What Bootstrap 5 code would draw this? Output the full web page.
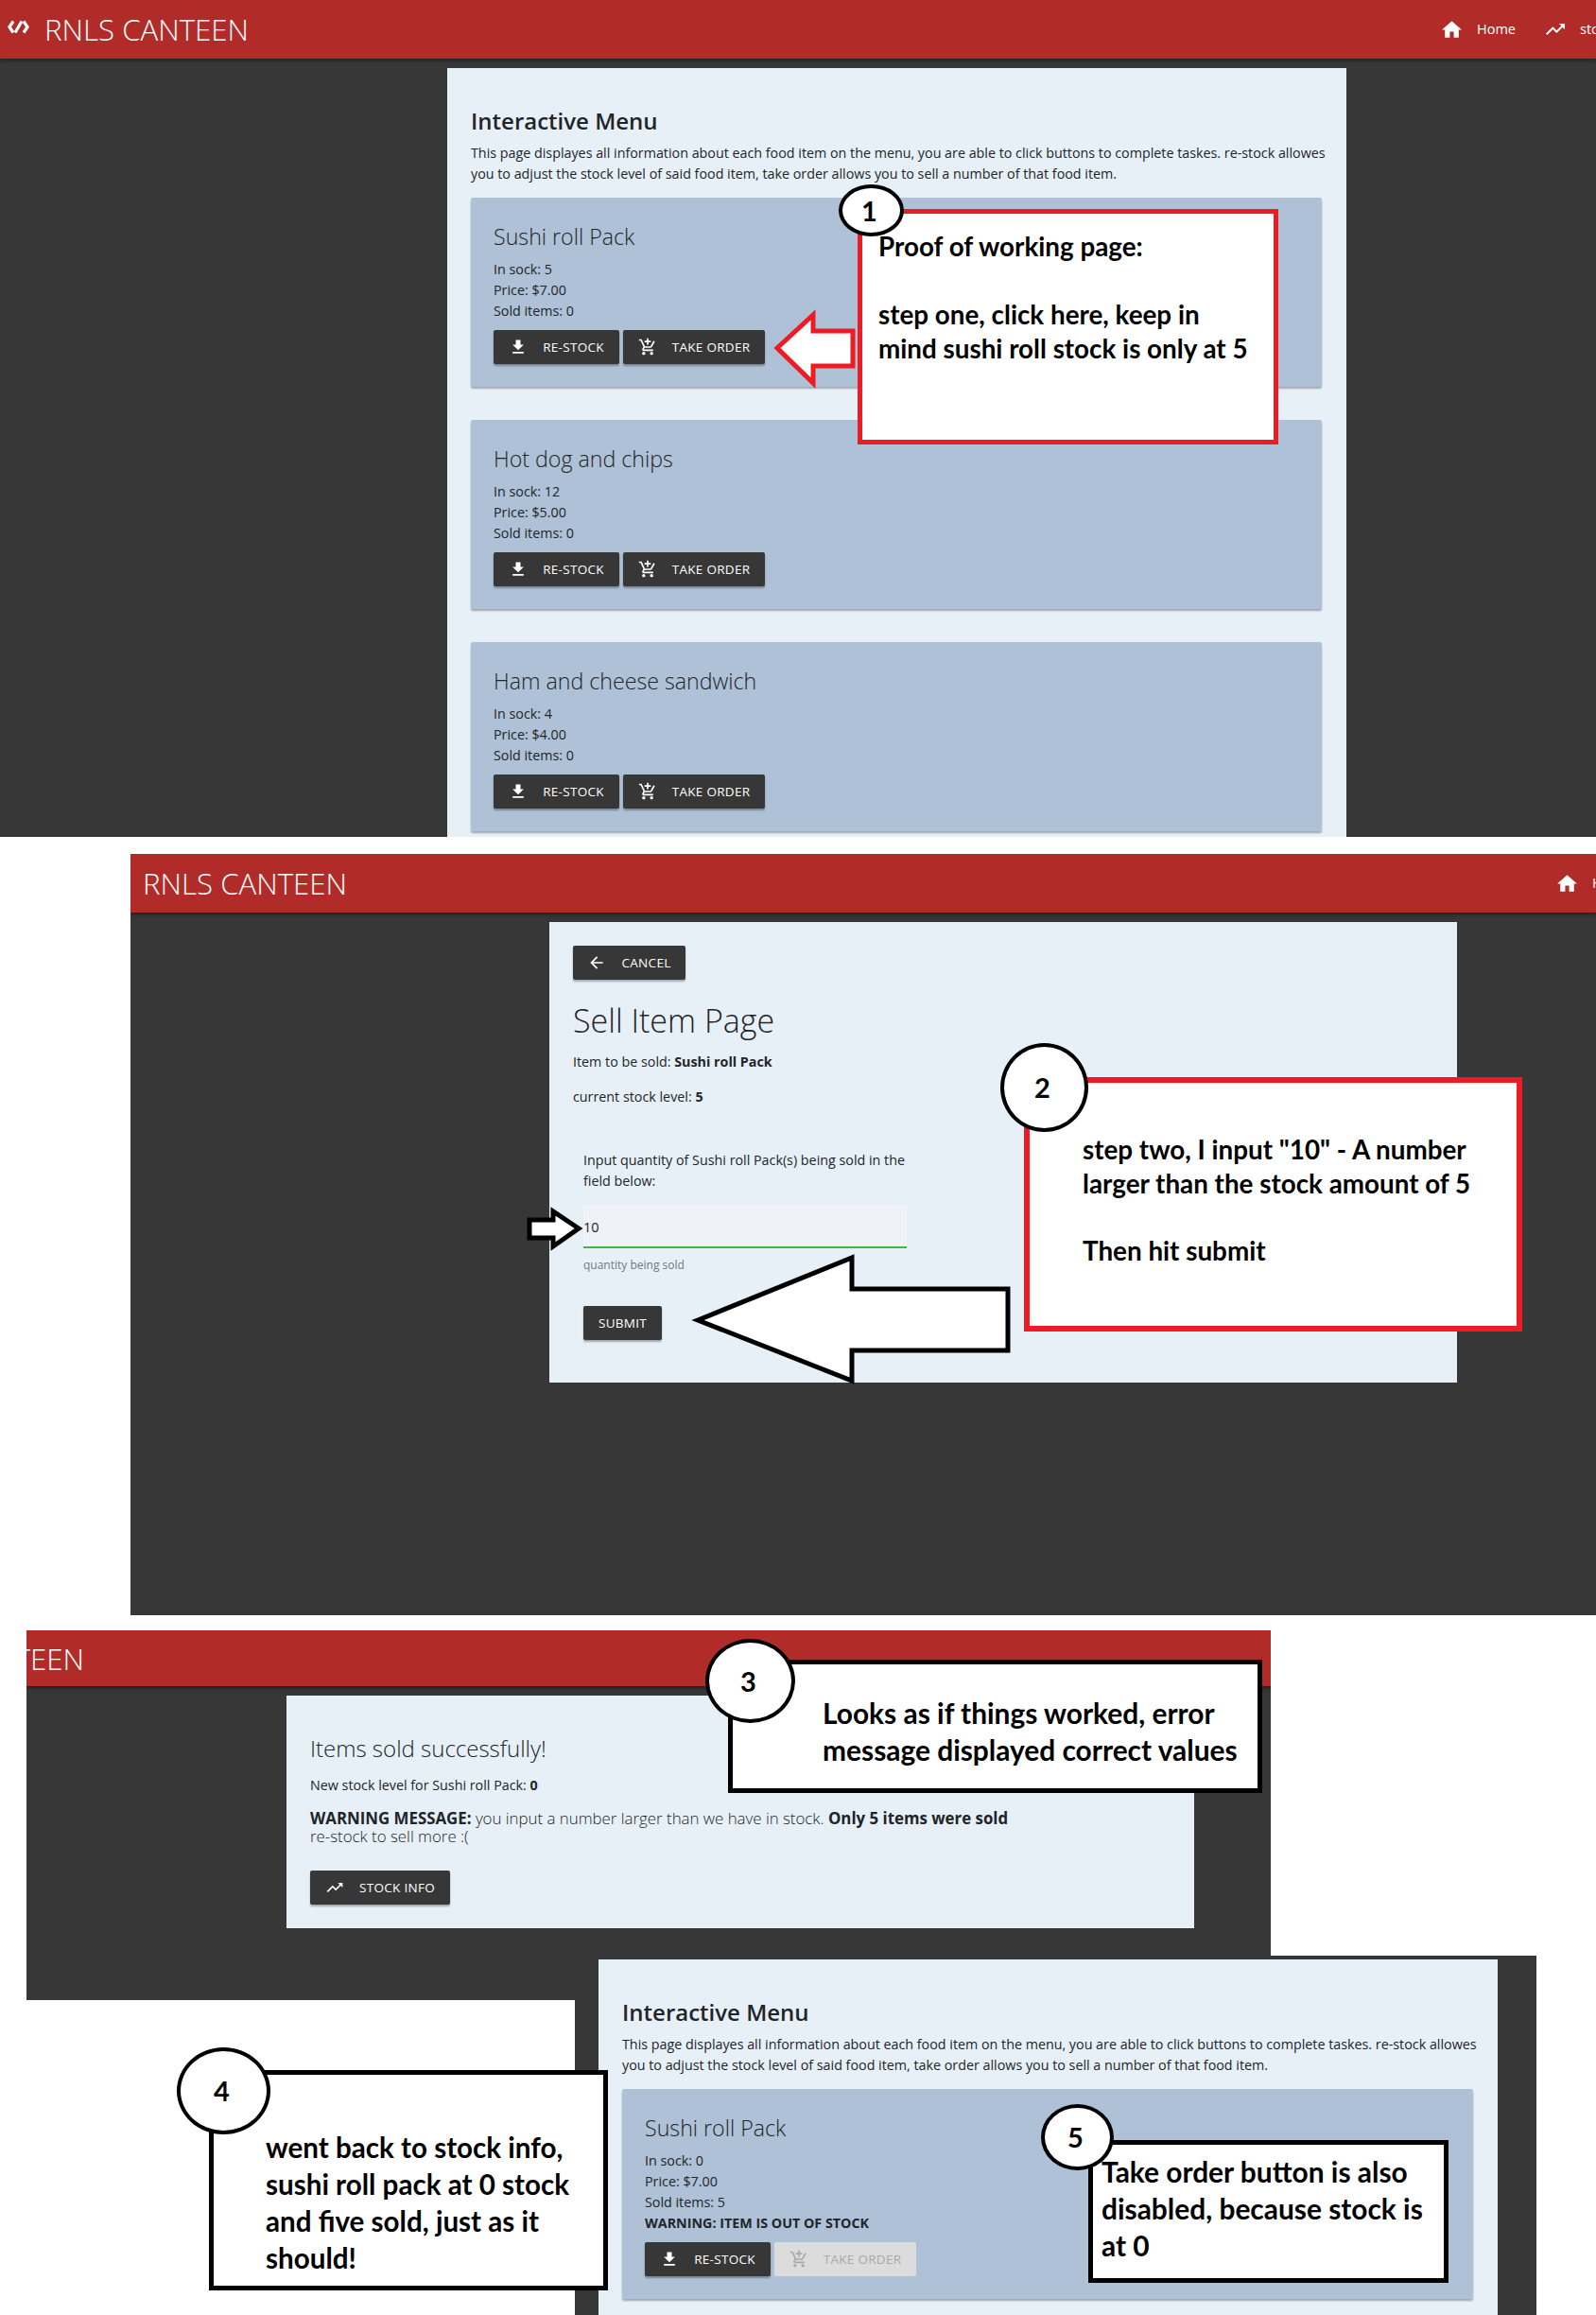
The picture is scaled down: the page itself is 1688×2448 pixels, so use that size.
<!DOCTYPE html>
<html lang="en">
<head>
  <meta charset="UTF-8">
  <title>RNLS Canteen - proof of working page</title>
  <link href="https://cdn.jsdelivr.net/npm/bootstrap@5.3.0/dist/css/bootstrap.min.css" rel="stylesheet">
  <style>
    body { background: #fff; margin: 0; font-family: "Open Sans", sans-serif; color: #212529; }
    .collage { position: relative; width: 1688px; height: 2448px; overflow: hidden; }

    /* the four pasted screenshots */
    .shot { position: absolute; background: #373737; overflow: hidden; }
    #shot1 { left: 0; top: 0; width: 1688px; height: 885px; }
    #shot2 { left: 138px; top: 903px; width: 1550px; height: 805px; }
    #shot3 { left: 28px; top: 1724px; width: 1316px; height: 391px; }
    #shot4 { left: 608px; top: 2068px; width: 1017px; height: 380px; }

    .app-bar { height: 62px; background: #b12c29; box-shadow: 0 2px 4px rgba(0,0,0,.45); padding: 0; flex-wrap: nowrap; justify-content: flex-start; }
    #shot3 .app-bar { height: 59px; }
    .app-brand { font-size: 31.2px; line-height: 62px; color: #fff; font-weight: 300; white-space: nowrap; }
    .app-logo { width: 23px; height: 15px; margin: 0 16px 5px 8px; flex-shrink: 0; }
    .app-nav { margin-left: auto; flex-shrink: 0; overflow: hidden; }
    #shot1 .app-nav { width: 165px; }
    #shot2 .app-nav { width: 43px; }
    .app-link { font-size: 14.5px; color: #fff; white-space: nowrap; font-weight: 400; }
    .app-link svg { width: 25px; height: 25px; fill: #fff; margin-right: 14px; flex-shrink: 0; }
    .app-link + .app-link { margin-left: 30px; }
    .app-link + .app-link svg { width: 24px; height: 24px; }
    #shot2 .app-brand { margin-left: 13px; }
    #shot3 .app-brand { margin-left: -155px; }

    .sheet { background: #e8f0f7; padding-left: 25px; padding-right: 26px; }
    #shot1 .sheet { width: 951px; height: 813px; margin: 10px 0 0 473px; padding-top: 40px; }
    #shot2 .sheet { width: 960px; height: 487px; margin: 10px 0 0 443px; padding-top: 25px; }
    #shot3 .sheet { width: 960px; height: 246px; margin: 10px 0 0 275px; padding-top: 38px; }
    #shot4 .sheet { width: 951px; height: 376px; margin: 4px 0 0 25px; padding-top: 40px; }

    .sheet-head { font-size: 24px; line-height: 32px; font-weight: 600; margin: 0; }
    .sheet-text { font-size: 14.3px; line-height: 22px; font-weight: 400; margin: 7px 0 14px; white-space: nowrap; }

    .food-card { background: #aec1d6; border: 0; border-radius: 2px; box-shadow: 0 2px 2px rgba(0,0,0,.3); padding: 24px; margin-bottom: 35px; }
    .food-name { font-size: 23.2px; line-height: 35px; font-weight: 300; margin: 0 0 6px; }
    .food-line { font-size: 14.3px; line-height: 22px; font-weight: 400; }
    .food-warn { font-size: 14.3px; line-height: 22px; font-weight: 700; }
    .food-actions { margin-top: 9px; }

    .dark-btn { height: 36px; background: #373737; color: #fff; border: 0; border-radius: 2px; font-size: 13.5px; line-height: 36px; padding: 0; letter-spacing: .3px;
      box-shadow: 0 2px 2px rgba(0,0,0,.3); text-transform: uppercase; white-space: nowrap; }
    .dark-btn:disabled { background: #dcdcdc; color: #a8a8a8; opacity: 1; box-shadow: none; }
    .dark-btn svg { width: 20px; height: 20px; fill: currentColor; }
    .btn-stock { width: 133px; }
    .btn-order { width: 150px; }
    .btn-cancel { width: 119px; }
    .btn-submit { width: 83px; }
    .btn-info-stock { width: 148px; }

    .sell-title { font-size: 34px; line-height: 44px; font-weight: 300; margin: 21px 0 11px; }
    .sell-line { font-size: 14.3px; line-height: 22px; font-weight: 400; margin: 0 0 15px; }
    .sell-form { width: 342px; margin: 45px 0 0 11px; }
    .sell-form p { font-size: 14.3px; line-height: 22px; font-weight: 400; margin: 0 0 14px; }
    .sell-input { height: 46px; background: #eff3f8; border: 0; border-bottom: 2px solid #4caf50; border-radius: 0; padding: 2px 0 0; font-size: 14.5px; box-shadow: none; }
    .sell-help { font-size: 12px; line-height: 18px; color: #6f7a84; margin-top: 9px; font-weight: 400; }
    .sell-form .dark-btn { margin-top: 34px; }

    .done-title { font-size: 24px; line-height: 36px; font-weight: 300; margin: 0 0 10px; }
    .done-line { font-size: 14.3px; line-height: 22px; font-weight: 400; margin: 0 0 14px; }
    .done-warn { font-size: 16.85px; line-height: 19px; font-weight: 300; margin: 0 0 27px; }
    .sheet b, .sheet strong { font-weight: 700; }

    /* paint annotations lying over the screenshots */
    .note { position: absolute; background: #fff; border: 5px solid #000; font-family: Lato, sans-serif; font-weight: 700; color: #000; white-space: nowrap; }
    #note1 { left: 907px; top: 221px; width: 445px; height: 249px; border-color: #ed1c24; padding: 17px 0 0 17px; font-size: 27.8px; line-height: 36px; }
    #note2 { left: 1083px; top: 1139px; width: 527px; height: 269px; border-color: #ed1c24; border-width: 6px; padding: 53px 0 0 56px; font-size: 27.8px; line-height: 35.7px; }
    #note3 { left: 770px; top: 1755px; width: 565px; height: 141px; padding: 32px 0 0 95px; font-size: 29.9px; line-height: 39px; }
    #note4 { left: 221px; top: 2189px; width: 422px; height: 233px; padding: 57px 0 0 55px; font-size: 29.6px; line-height: 39px; }
    #note5 { left: 1151px; top: 2263px; width: 381px; height: 151px; padding: 9px 0 0 9px; font-size: 29.9px; line-height: 39px; }

    .step-dot { position: absolute; background: #fff; border: 4px solid #000; border-radius: 50%; font-family: Lato, sans-serif; font-weight: 700; color: #000;
      display: flex; align-items: center; justify-content: center; font-size: 29px; padding-right: 4px; }
    #dot1 { left: 887px; top: 195px; width: 69px; height: 55px; }
    #dot2 { left: 1058px; top: 1103px; width: 93px; height: 94px; }
    #dot3 { left: 746px; top: 1733px; width: 95px; height: 89px; }
    #dot4 { left: 187px; top: 2165px; width: 99px; height: 92px; }
    #dot5 { left: 1101px; top: 2225px; width: 77px; height: 70px; }

    .paint-arrow { position: absolute; left: 0; top: 0; width: 1688px; height: 2448px; pointer-events: none; }
  </style>
</head>
<body>

<svg width="0" height="0" class="d-block">
  <symbol id="i-home" viewBox="0 0 24 24"><path d="M10 20v-6h4v6h5v-8h3L12 3 2 12h3v8z"/></symbol>
  <symbol id="i-down" viewBox="0 0 24 24"><path d="M19 9h-4V3H9v6H5l7 7 7-7zM5 18v2h14v-2H5z"/></symbol>
  <symbol id="i-cart" viewBox="0 0 24 24"><path d="M11 9h2V6h3V4h-3V1h-2v3H8v2h3v3zm-4 9c-1.1 0-1.99.9-1.99 2S5.9 22 7 22s2-.9 2-2-.9-2-2-2zm10 0c-1.1 0-1.99.9-1.99 2s.89 2 1.99 2 2-.9 2-2-.9-2-2-2zm-9.83-3.25l.03-.12.9-1.63h7.45c.75 0 1.41-.41 1.75-1.03l3.86-7.01L19.42 4h-.01l-1.1 2-2.76 5H8.53l-.13-.27L6.16 6l-.95-2-.94-2H1v2h2l3.6 7.59-1.35 2.45c-.16.28-.25.61-.25.96 0 1.1.9 2 2 2h12v-2H7.42c-.13 0-.25-.11-.25-.25z"/></symbol>
  <symbol id="i-trend" viewBox="0 0 24 24"><path d="M16 6l2.29 2.29-4.88 4.88-4-4L2 16.59 3.41 18l6-6 4 4 6.3-6.29L22 12V6z"/></symbol>
  <symbol id="i-back" viewBox="0 0 24 24"><path d="M20 11H7.83l5.59-5.59L12 4l-8 8 8 8 1.41-1.41L7.83 13H20v-2z"/></symbol>
</svg>

<div class="collage">

  <!-- Shot 1: stock list -->
  <div class="shot" id="shot1">
    <nav class="navbar app-bar">
      <svg class="app-logo" viewBox="0 0 23 15" fill="none" stroke="#fff" stroke-width="3.2"><path d="M6 1.5L2 7.5l4 6M17 1.5l4 6-4 6M15 1.5L8 13.5"/></svg>
      <span class="app-brand">RNLS CANTEEN</span>
      <div class="app-nav d-flex align-items-center">
        <a class="app-link text-decoration-none d-flex align-items-center"><svg><use href="#i-home"/></svg>Home</a>
        <a class="app-link text-decoration-none d-flex align-items-center"><svg><use href="#i-trend"/></svg>stock info</a>
      </div>
    </nav>
    <div class="sheet">
      <h1 class="sheet-head">Interactive Menu</h1>
      <p class="sheet-text">This page displayes all information about each food item on the menu, you are able to click buttons to complete taskes. re-stock allowes<br>you to adjust the stock level of said food item, take order allows you to sell a number of that food item.</p>

      <div class="card food-card">
        <h2 class="food-name">Sushi roll Pack</h2>
        <div class="food-line">In sock: 5</div>
        <div class="food-line">Price: $7.00</div>
        <div class="food-line">Sold items: 0</div>
        <div class="d-flex gap-1 food-actions">
          <button class="btn dark-btn btn-stock d-flex align-items-center justify-content-center gap-3"><svg><use href="#i-down"/></svg>Re-stock</button>
          <button class="btn dark-btn btn-order d-flex align-items-center justify-content-center gap-3"><svg><use href="#i-cart"/></svg>Take order</button>
        </div>
      </div>

      <div class="card food-card">
        <h2 class="food-name">Hot dog and chips</h2>
        <div class="food-line">In sock: 12</div>
        <div class="food-line">Price: $5.00</div>
        <div class="food-line">Sold items: 0</div>
        <div class="d-flex gap-1 food-actions">
          <button class="btn dark-btn btn-stock d-flex align-items-center justify-content-center gap-3"><svg><use href="#i-down"/></svg>Re-stock</button>
          <button class="btn dark-btn btn-order d-flex align-items-center justify-content-center gap-3"><svg><use href="#i-cart"/></svg>Take order</button>
        </div>
      </div>

      <div class="card food-card">
        <h2 class="food-name">Ham and cheese sandwich</h2>
        <div class="food-line">In sock: 4</div>
        <div class="food-line">Price: $4.00</div>
        <div class="food-line">Sold items: 0</div>
        <div class="d-flex gap-1 food-actions">
          <button class="btn dark-btn btn-stock d-flex align-items-center justify-content-center gap-3"><svg><use href="#i-down"/></svg>Re-stock</button>
          <button class="btn dark-btn btn-order d-flex align-items-center justify-content-center gap-3"><svg><use href="#i-cart"/></svg>Take order</button>
        </div>
      </div>
    </div>
  </div>

  <!-- Shot 2: sell item form -->
  <div class="shot" id="shot2">
    <nav class="navbar app-bar">
      <span class="app-brand">RNLS CANTEEN</span>
      <div class="app-nav d-flex align-items-center">
        <a class="app-link text-decoration-none d-flex align-items-center"><svg><use href="#i-home"/></svg>Home</a>
      </div>
    </nav>
    <div class="sheet">
      <button class="btn dark-btn btn-cancel d-flex align-items-center justify-content-center gap-3"><svg><use href="#i-back"/></svg>Cancel</button>
      <h2 class="sell-title">Sell Item Page</h2>
      <p class="sell-line">Item to be sold: <b>Sushi roll Pack</b></p>
      <p class="sell-line">current stock level: <b>5</b></p>
      <form class="sell-form">
        <p>Input quantity of Sushi roll Pack(s) being sold in the field below:</p>
        <input class="form-control sell-input" type="text" value="10">
        <div class="sell-help">quantity being sold</div>
        <button type="button" class="btn dark-btn btn-submit">Submit</button>
      </form>
    </div>
  </div>

  <!-- Shot 3: result message -->
  <div class="shot" id="shot3">
    <nav class="navbar app-bar">
      <span class="app-brand">RNLS CANTEEN</span>
    </nav>
    <div class="sheet">
      <h2 class="done-title">Items sold successfully!</h2>
      <p class="done-line">New stock level for Sushi roll Pack: <b>0</b></p>
      <p class="done-warn"><b>WARNING MESSAGE:</b> you input a number larger than we have in stock. <b>Only 5 items were sold</b><br>re-stock to sell more :(</p>
      <button class="btn dark-btn btn-info-stock d-flex align-items-center justify-content-center gap-3"><svg><use href="#i-trend"/></svg>Stock info</button>
    </div>
  </div>

  <!-- Shot 4: stock list after the sale -->
  <div class="shot" id="shot4">
    <div class="sheet">
      <h1 class="sheet-head">Interactive Menu</h1>
      <p class="sheet-text">This page displayes all information about each food item on the menu, you are able to click buttons to complete taskes. re-stock allowes<br>you to adjust the stock level of said food item, take order allows you to sell a number of that food item.</p>
      <div class="card food-card">
        <h2 class="food-name">Sushi roll Pack</h2>
        <div class="food-line">In sock: 0</div>
        <div class="food-line">Price: $7.00</div>
        <div class="food-line">Sold items: 5</div>
        <div class="food-warn">WARNING: ITEM IS OUT OF STOCK</div>
        <div class="d-flex gap-1 food-actions">
          <button class="btn dark-btn btn-stock d-flex align-items-center justify-content-center gap-3"><svg><use href="#i-down"/></svg>Re-stock</button>
          <button class="btn dark-btn btn-order d-flex align-items-center justify-content-center gap-3" disabled><svg><use href="#i-cart"/></svg>Take order</button>
        </div>
      </div>
    </div>
  </div>

  <!-- Arrows painted over the shots -->
  <svg class="paint-arrow" viewBox="0 0 1688 2448">
    <path d="M822 368L860 333V350H902V387H860V405Z" fill="#fff" stroke="#ed1c24" stroke-width="5"/>
    <path d="M612 1299L585 1281V1290H560V1309H585V1318Z" fill="#fff" stroke="#000" stroke-width="5"/>
    <path d="M738 1396L901 1330V1363H1066V1428H901V1460Z" fill="#fff" stroke="#000" stroke-width="5"/>
  </svg>

  <div class="note" id="note1">Proof of working page:<br><br>step one, click here, keep in<br>mind sushi roll stock is only at 5</div>
  <div class="step-dot" id="dot1">1</div>

  <div class="note" id="note2">step two, I input "10" - A number<br>larger than the stock amount of 5<br><br>Then hit submit</div>
  <div class="step-dot" id="dot2">2</div>

  <div class="note" id="note3">Looks as if things worked, error<br>message displayed correct values</div>
  <div class="step-dot" id="dot3">3</div>

  <div class="note" id="note4">went back to stock info,<br>sushi roll pack at 0 stock<br>and five sold, just as it<br>should!</div>
  <div class="step-dot" id="dot4">4</div>

  <div class="note" id="note5">Take order button is also<br>disabled, because stock is<br>at 0</div>
  <div class="step-dot" id="dot5">5</div>

</div>

<script src="https://cdn.jsdelivr.net/npm/bootstrap@5.3.0/dist/js/bootstrap.bundle.min.js"></script>
</body>
</html>
